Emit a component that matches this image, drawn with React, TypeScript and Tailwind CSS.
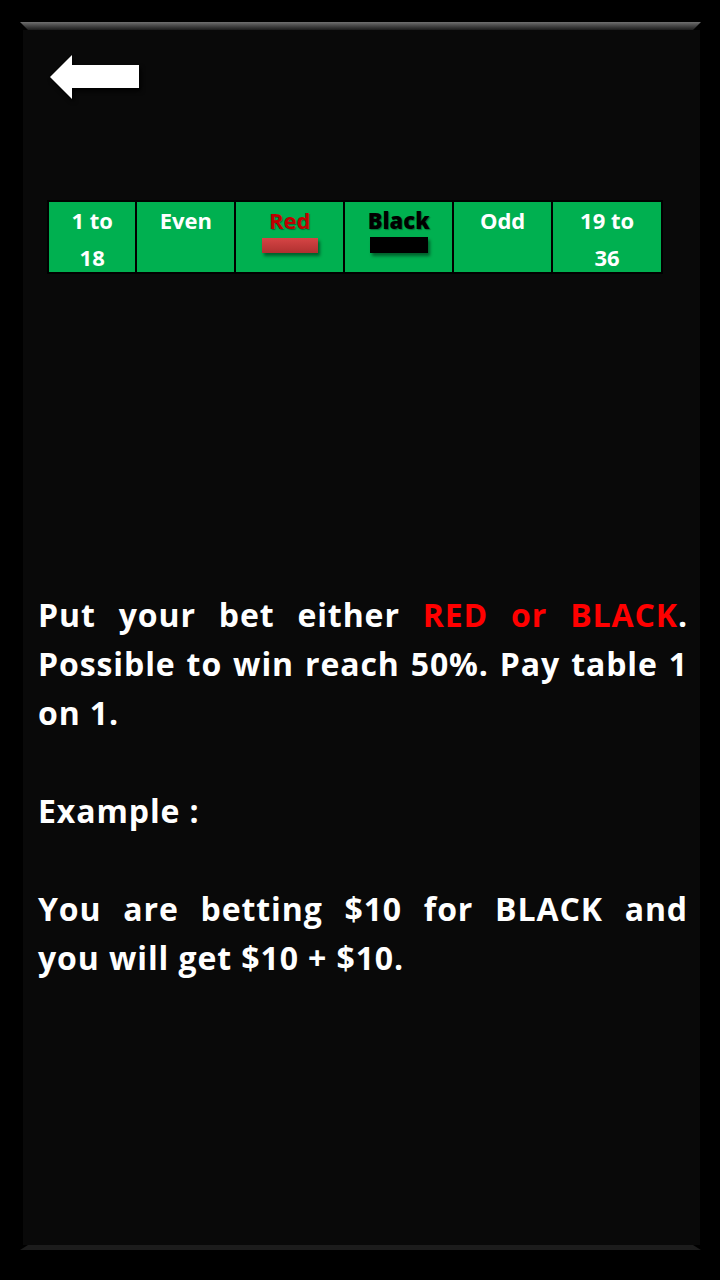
export default function App() {
  const cells = [
    { w: "w-[88px]", top: "1 to", bottom: "18" },
    { w: "w-[99px]", top: "Even" },
    { w: "w-[109px]", top: "Red", kind: "red" },
    { w: "w-[109px]", top: "Black", kind: "black" },
    { w: "w-[99px]", top: "Odd" },
    { w: "w-[110px]", top: "19 to", bottom: "36" },
  ];

  const full = "text-justify [text-align-last:justify]";

  return (
    <div className="w-[720px] h-[1280px] bg-black pt-[22px] font-['Open_Sans','Liberation_Sans',sans-serif]">
      {/* Panel */}
      <div className="ml-[20px] w-[681px] h-[1228px] flex flex-col">
        <div className="h-[8px] bg-gradient-to-b from-[#707070] to-[#1c1c1c] [clip-path:polygon(0_0,100%_0,calc(100%-8px)_100%,8px_100%)]"></div>
        <div className="flex-1 ml-[3px] mr-[1px] bg-[#090909] flex flex-col">
          {/* Back arrow */}
          <div className="mt-[25px] ml-[27px]">
            <svg width="92" height="46" viewBox="0 0 92 46" className="drop-shadow-[2px_3px_2px_rgba(0,0,0,0.9)]">
              <path d="M0 22 L22 0 L22 10 L89 10 L89 33 L22 33 L22 44 Z" fill="#ffffff" />
            </svg>
          </div>

          {/* Bet table */}
          <div className="mt-[99px] ml-[24px] flex h-[74px] border-2 border-black w-[616px] bg-black gap-[2px]">
            {cells.map((c, i) => (
              <div
                key={i}
                className={`${c.w} bg-[#00b050] flex flex-col items-center text-[22px] leading-[37px] font-bold text-white`}
              >
                {c.kind === "red" ? (
                  <>
                    <span className="text-[#c00000] [text-shadow:1px_1px_1px_rgba(0,0,0,0.35)]">{c.top}</span>
                    <div className="w-[56px] h-[15px] -mt-[1px] bg-gradient-to-b from-[#d64545] to-[#b03030] shadow-[2px_3px_3px_rgba(0,0,0,0.45)]"></div>
                  </>
                ) : c.kind === "black" ? (
                  <>
                    <span className="text-black font-extrabold [text-shadow:1px_1px_1px_rgba(0,0,0,0.35)]">{c.top}</span>
                    <div className="w-[58px] h-[16px] -mt-[2px] bg-black shadow-[2px_3px_3px_rgba(0,0,0,0.45)]"></div>
                  </>
                ) : (
                  <>
                    <span>{c.top}</span>
                    {c.bottom && <span>{c.bottom}</span>}
                  </>
                )}
              </div>
            ))}
          </div>

          {/* Description */}
          <div className="mt-[316px] ml-[15px] w-[650px] text-white font-bold text-[32px] leading-[49px] tracking-[0.9px]">
            <div className={full}>
              Put your bet either <span className="text-[#ff0000]">RED or BLACK</span>.
            </div>
            <div className={full}>Possible to win reach 50%. Pay table 1</div>
            <div>on 1.</div>
            <div className="mt-[49px]">Example :</div>
            <div className={`mt-[49px] ${full}`}>You are betting $10 for BLACK and</div>
            <div>you will get $10 + $10.</div>
          </div>
        </div>
        <div className="h-[5px] bg-[#1c1c1c] [clip-path:polygon(8px_0,calc(100%-8px)_0,100%_100%,0_100%)]"></div>
      </div>
    </div>
  );
}
